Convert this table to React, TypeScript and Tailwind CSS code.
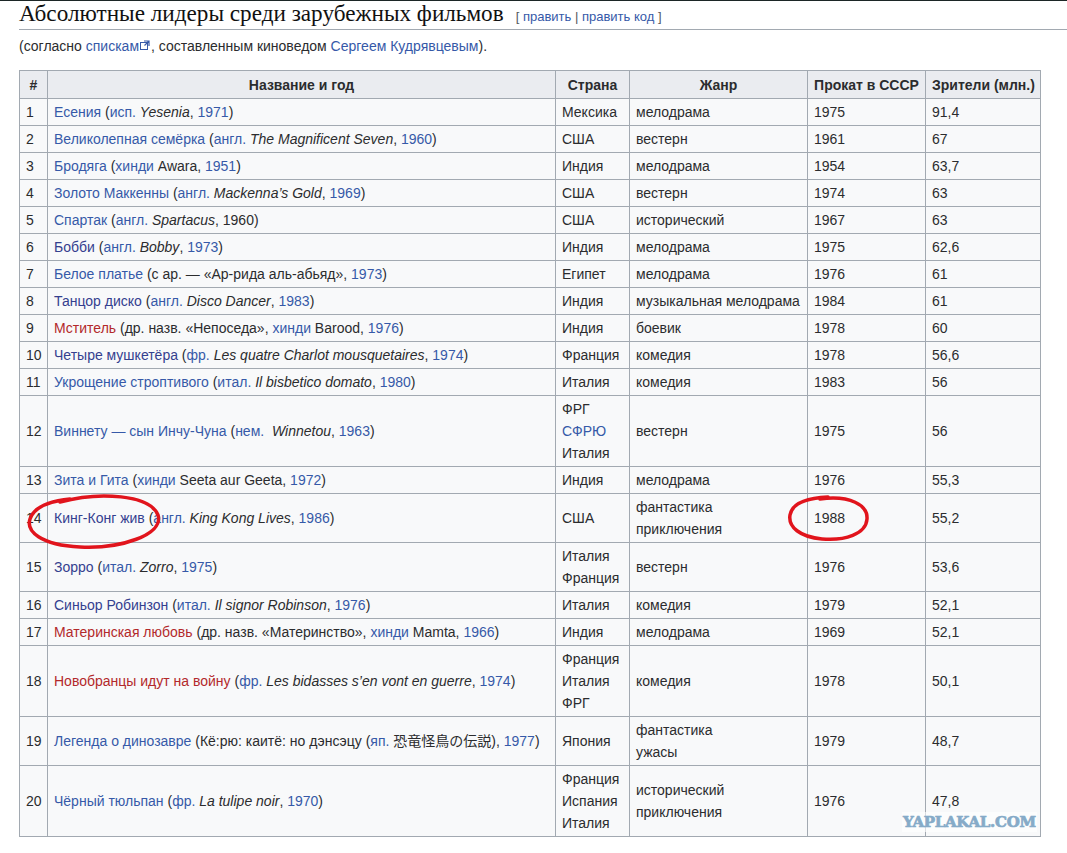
type Kind = 't' | 'l' | 'v' | 'r' | 'i';
type Seg = [string, Kind?];

interface Film {
  n: number;
  title: Seg[];
  country: Seg[];
  genre: string[];
  year: string;
  views: string;
}

const kindClass: Record<Kind, string> = {
  t: '',
  l: 'text-[#3659a8]',
  v: 'text-[#34408f]',
  r: 'text-[#b3292b]',
  i: 'italic',
};

const films: Film[] = [
  { n: 1, title: [['Есения', 'l'], [' ('], ['исп.', 'l'], [' '], ['Yesenia', 'i'], [', '], ['1971', 'l'], [')']], country: [['Мексика']], genre: ['мелодрама'], year: '1975', views: '91,4' },
  { n: 2, title: [['Великолепная семёрка', 'l'], [' ('], ['англ.', 'l'], [' '], ['The Magnificent Seven', 'i'], [', '], ['1960', 'l'], [')']], country: [['США']], genre: ['вестерн'], year: '1961', views: '67' },
  { n: 3, title: [['Бродяга', 'l'], [' ('], ['хинди', 'l'], [' Awara, '], ['1951', 'l'], [')']], country: [['Индия']], genre: ['мелодрама'], year: '1954', views: '63,7' },
  { n: 4, title: [['Золото Маккенны', 'l'], [' ('], ['англ.', 'l'], [' '], ['Mackenna’s Gold', 'i'], [', '], ['1969', 'l'], [')']], country: [['США']], genre: ['вестерн'], year: '1974', views: '63' },
  { n: 5, title: [['Спартак', 'l'], [' ('], ['англ.', 'l'], [' '], ['Spartacus', 'i'], [', 1960)']], country: [['США']], genre: ['исторический'], year: '1967', views: '63' },
  { n: 6, title: [['Бобби', 'v'], [' ('], ['англ.', 'l'], [' '], ['Bobby', 'i'], [', '], ['1973', 'l'], [')']], country: [['Индия']], genre: ['мелодрама'], year: '1975', views: '62,6' },
  { n: 7, title: [['Белое платье', 'l'], [' (с ар. — «Ар-рида аль-абьяд», '], ['1973', 'l'], [')']], country: [['Египет']], genre: ['мелодрама'], year: '1976', views: '61' },
  { n: 8, title: [['Танцор диско', 'v'], [' ('], ['англ.', 'l'], [' '], ['Disco Dancer', 'i'], [', '], ['1983', 'l'], [')']], country: [['Индия']], genre: ['музыкальная мелодрама'], year: '1984', views: '61' },
  { n: 9, title: [['Мститель', 'r'], [' (др. назв. «Непоседа», '], ['хинди', 'l'], [' Barood, '], ['1976', 'l'], [')']], country: [['Индия']], genre: ['боевик'], year: '1978', views: '60' },
  { n: 10, title: [['Четыре мушкетёра', 'v'], [' ('], ['фр.', 'l'], [' '], ['Les quatre Charlot mousquetaires', 'i'], [', '], ['1974', 'l'], [')']], country: [['Франция']], genre: ['комедия'], year: '1978', views: '56,6' },
  { n: 11, title: [['Укрощение строптивого', 'l'], [' ('], ['итал.', 'l'], [' '], ['Il bisbetico domato', 'i'], [', '], ['1980', 'l'], [')']], country: [['Италия']], genre: ['комедия'], year: '1983', views: '56' },
  { n: 12, title: [['Виннету — сын Инчу-Чуна', 'l'], [' ('], ['нем.', 'l'], ['\u00a0 '], ['Winnetou', 'i'], [', '], ['1963', 'l'], [')']], country: [['ФРГ'], ['СФРЮ', 'l'], ['Италия']], genre: ['вестерн'], year: '1975', views: '56' },
  { n: 13, title: [['Зита и Гита', 'l'], [' ('], ['хинди', 'l'], [' Seeta aur Geeta, '], ['1972', 'l'], [')']], country: [['Индия']], genre: ['мелодрама'], year: '1976', views: '55,3' },
  { n: 14, title: [['Кинг-Конг жив', 'v'], [' ('], ['англ.', 'l'], [' '], ['King Kong Lives', 'i'], [', '], ['1986', 'l'], [')']], country: [['США']], genre: ['фантастика', 'приключения'], year: '1988', views: '55,2' },
  { n: 15, title: [['Зорро', 'v'], [' ('], ['итал.', 'l'], [' '], ['Zorro', 'i'], [', '], ['1975', 'l'], [')']], country: [['Италия'], ['Франция']], genre: ['вестерн'], year: '1976', views: '53,6' },
  { n: 16, title: [['Синьор Робинзон', 'v'], [' ('], ['итал.', 'l'], [' '], ['Il signor Robinson', 'i'], [', '], ['1976', 'l'], [')']], country: [['Италия']], genre: ['комедия'], year: '1979', views: '52,1' },
  { n: 17, title: [['Материнская любовь', 'r'], [' (др. назв. «Материнство», '], ['хинди', 'l'], [' Mamta, '], ['1966', 'l'], [')']], country: [['Индия']], genre: ['мелодрама'], year: '1969', views: '52,1' },
  { n: 18, title: [['Новобранцы идут на войну', 'r'], [' ('], ['фр.', 'l'], [' '], ['Les bidasses s’en vont en guerre', 'i'], [', '], ['1974', 'l'], [')']], country: [['Франция'], ['Италия'], ['ФРГ']], genre: ['комедия'], year: '1978', views: '50,1' },
  { n: 19, title: [['Легенда о динозавре', 'l'], [' (Кё:рю: каитё: но дэнсэцу ('], ['яп.', 'l'], [' 恐竜怪鳥の伝説), '], ['1977', 'l'], [')']], country: [['Япония']], genre: ['фантастика', 'ужасы'], year: '1979', views: '48,7' },
  { n: 20, title: [['Чёрный тюльпан', 'l'], [' ('], ['фр.', 'l'], [' '], ['La tulipe noir', 'i'], [', '], ['1970', 'l'], [')']], country: [['Франция'], ['Испания'], ['Италия']], genre: ['исторический', 'приключения'], year: '1976', views: '47,8' },
];

function Segs({ segs }: { segs: Seg[] }) {
  return (
    <>
      {segs.map(([text, kind], i) => (
        <span key={i} className={kindClass[kind ?? 't']}>
          {text}
        </span>
      ))}
    </>
  );
}

const td = 'border border-[#a2a9b1] px-[6px] py-[2px] align-middle';
const th = 'border border-[#a2a9b1] px-[6px] pt-[3px] pb-[2px] bg-[#eaecf0] font-bold text-center';

export default function App() {
  return (
    <div className="relative w-[1067px] h-[853px] overflow-hidden bg-white border-t border-[#1c2626] text-[#2b2c2e] font-['Liberation_Sans','Noto_Sans_CJK_JP',sans-serif]">
      <div className="pl-[19px]">
        <h2 className="flex items-baseline border-b border-[#a2a9b1] leading-[25px]">
          <span className="text-[23.2px] font-['Liberation_Serif',serif] text-[#111]">
            Абсолютные лидеры среди зарубежных фильмов
          </span>
          <span className="ml-[12px] text-[13px] text-[#54595d]">
            [ <span className="text-[#3659a8]">править</span> | <span className="text-[#3659a8]">править код</span> ]
          </span>
        </h2>

        <p className="mt-[5px] text-[14px] leading-[22px]">
          (согласно <span className="text-[#3659a8]">спискам</span>
          <svg className="inline-block align-[1px] mx-[1px]" width="10" height="10" viewBox="0 0 10 10">
            <rect x="0.5" y="2.5" width="7" height="7" fill="none" stroke="#3659a8" strokeWidth="1" />
            <path d="M4 1h5v5M9 1L4.5 5.5" fill="none" stroke="#3659a8" strokeWidth="1.2" />
          </svg>
          , составленным киноведом <span className="text-[#3659a8]">Сергеем Кудрявцевым</span>).
        </p>

        <table className="mt-[13px] w-[1021px] table-fixed border-collapse bg-[#f8f9fa] text-[14px] leading-[22px]">
          <colgroup>
            <col className="w-[28px]" />
            <col className="w-[508px]" />
            <col className="w-[74px]" />
            <col className="w-[178px]" />
            <col className="w-[118px]" />
            <col className="w-[115px]" />
          </colgroup>
          <thead>
            <tr>
              <th className={th}>#</th>
              <th className={th}>Название и год</th>
              <th className={th}>Страна</th>
              <th className={th}>Жанр</th>
              <th className={th + ' whitespace-nowrap px-[4px]'}>Прокат в СССР</th>
              <th className={th + ' whitespace-nowrap px-[4px]'}>Зрители (млн.)</th>
            </tr>
          </thead>
          <tbody>
            {films.map((f) => (
              <tr key={f.n}>
                <td className={td + ' px-[5px]'}>{f.n}</td>
                <td className={td + ' whitespace-nowrap'}>
                  <Segs segs={f.title} />
                </td>
                <td className={td}>
                  {f.country.map(([c, k], i) => (
                    <div key={i} className={kindClass[k ?? 't']}>
                      {c}
                    </div>
                  ))}
                </td>
                <td className={td + ' whitespace-nowrap'}>
                  {f.genre.map((g) => (
                    <div key={g}>{g}</div>
                  ))}
                </td>
                <td className={td}>{f.year}</td>
                <td className={td}>{f.views}</td>
              </tr>
            ))}
          </tbody>
        </table>
      </div>

      {/* hand-drawn red marks */}
      <svg className="pointer-events-none absolute left-0 top-0" width="1067" height="853" viewBox="0 0 1067 853">
        <path
          d="M60 501 C 100 490, 150 494, 158 514 C 164 534, 120 548, 80 546 C 40 544, 26 530, 30 518 C 34 506, 50 500, 70 498"
          fill="none"
          stroke="#e1141c"
          strokeWidth="3.5"
          strokeLinecap="round"
        />
        <path
          d="M820 498 C 850 494, 868 504, 867 518 C 866 533, 845 540, 822 538 C 800 536, 788 526, 790 514 C 792 503, 806 497, 828 496"
          fill="none"
          stroke="#e1141c"
          strokeWidth="3.5"
          strokeLinecap="round"
        />
      </svg>

      <div className="absolute left-[902px] top-[811px] px-[1px] bg-white/60 text-[15px] leading-[20px] font-bold tracking-[-0.3px] text-[#86abc8] [-webkit-text-stroke:0.7px_#86abc8] font-['DejaVu_Serif',serif]">
        YAPLAKAL.COM
      </div>
    </div>
  );
}
